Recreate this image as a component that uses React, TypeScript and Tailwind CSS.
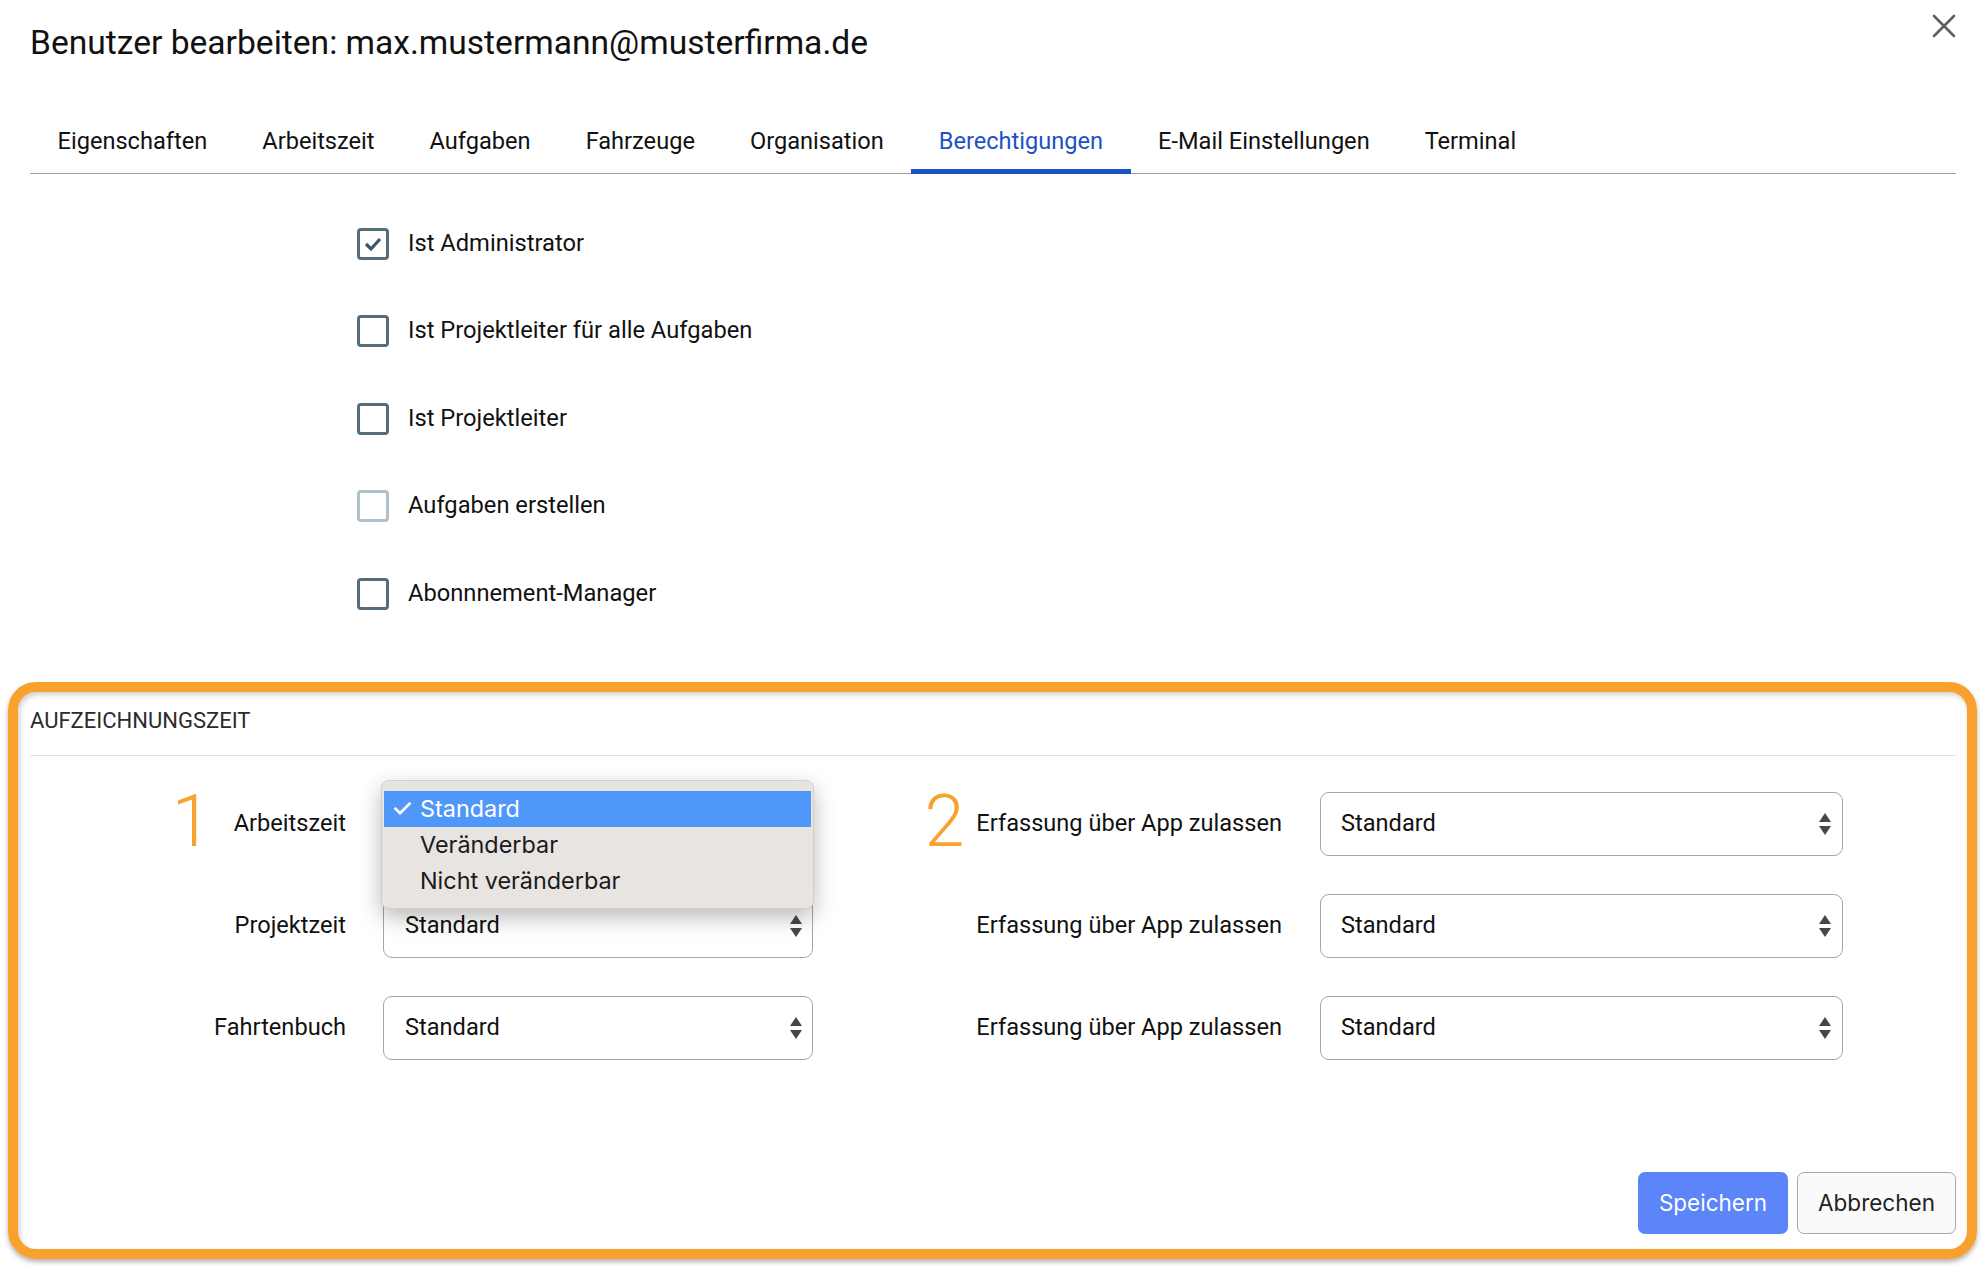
import React from "react";

const tabs = [
  "Eigenschaften",
  "Arbeitszeit",
  "Aufgaben",
  "Fahrzeuge",
  "Organisation",
  "Berechtigungen",
  "E-Mail Einstellungen",
  "Terminal",
];

const checks = [
  { label: "Ist Administrator", checked: true, disabled: false },
  { label: "Ist Projektleiter für alle Aufgaben", checked: false, disabled: false },
  { label: "Ist Projektleiter", checked: false, disabled: false },
  { label: "Aufgaben erstellen", checked: false, disabled: true },
  { label: "Abonnnement-Manager", checked: false, disabled: false },
];

function Arrows() {
  return (
    <svg width="12" height="22" viewBox="0 0 12 22" className="shrink-0">
      <path d="M6 0 L12 9 L0 9 Z" fill="#474747" />
      <path d="M0 13 L12 13 L6 22 Z" fill="#474747" />
    </svg>
  );
}

function Select({ wide, children }: { wide?: boolean; children?: React.ReactNode }) {
  return (
    <div
      className={
        wide
          ? "relative w-[523px] h-[64px] rounded-[9px] border border-[#a6a6a6] bg-white flex items-center justify-between pl-[20px] pr-[11px]"
          : "relative w-[430px] h-[64px] rounded-[9px] border border-[#a6a6a6] bg-white flex items-center justify-between pl-[21px] pr-[10px]"
      }
    >
      <span className="text-[23.6px] text-[#111]">Standard</span>
      <Arrows />
      {children}
    </div>
  );
}

function Popup() {
  return (
    <div className="absolute left-[-3px] top-[-13px] w-[433px] h-[129px] rounded-[8px] bg-[#e8e4e1] border border-[#d2cecb] shadow-[0_8px_22px_rgba(0,0,0,0.28)] pt-[10px] px-[2px] font-['Inter','Noto_Sans',sans-serif] text-[23.4px] text-[#1a1a1a] z-10">
      <div className="h-[36px] bg-[#4f97f8] text-white flex items-center pl-[7px]">
        <span className="w-[29px] text-[25px] leading-none font-medium">✓</span>
        <span>Standard</span>
      </div>
      <div className="h-[36px] flex items-center pl-[36px]">Veränderbar</div>
      <div className="h-[36px] flex items-center pl-[36px]">Nicht veränderbar</div>
    </div>
  );
}

export default function App() {
  return (
    <div className="w-[1986px] h-[1270px] bg-white font-['Roboto','Liberation_Sans',sans-serif] text-[#111] overflow-hidden">
      {/* Title */}
      <div className="h-[86px] px-[30px] flex items-center justify-between">
        <h1 className="text-[33.6px] leading-none font-normal text-[#111]">
          Benutzer bearbeiten: max.mustermann@musterfirma.de
        </h1>
        <svg width="24" height="24" viewBox="0 0 24 24" className="self-start mt-[14px]">
          <path d="M2 2 L22 22 M22 2 L2 22" stroke="#5f5f5f" strokeWidth="2.6" strokeLinecap="round" />
        </svg>
      </div>

      {/* Tabs */}
      <div className="mx-[30px] mt-[22px] flex border-b border-[#9e9e9e]">
        {tabs.map((t) => {
          const active = t === "Berechtigungen";
          return (
            <div
              key={t}
              className={
                active
                  ? "h-[66px] -mb-px px-[27.5px] pt-[6px] flex items-center text-[23.6px] text-[#1c53c3] border-b-[5px] border-[#1c53c3]"
                  : "h-[66px] -mb-px px-[27.5px] pt-[6px] flex items-center text-[23.6px] text-[#111] border-b-[5px] border-transparent"
              }
            >
              {t}
            </div>
          );
        })}
      </div>

      {/* Checkboxes */}
      <div className="pl-[357px] pt-[26px]">
        {checks.map((c) => (
          <div key={c.label} className="h-[87.5px] flex items-center">
            <div
              className={
                c.disabled
                  ? "w-[32px] h-[32px] rounded-[4px] border-[3px] border-[#b1bfc8] flex items-center justify-center"
                  : "w-[32px] h-[32px] rounded-[4px] border-[3px] border-[#546c7c] flex items-center justify-center"
              }
            >
              {c.checked && (
                <svg width="22" height="18" viewBox="0 0 22 18">
                  <path d="M4 9 L9 14 L18 4" fill="none" stroke="#3f5666" strokeWidth="3.2" />
                </svg>
              )}
            </div>
            <span className="ml-[19px] text-[23.7px] text-[#111]">{c.label}</span>
          </div>
        ))}
      </div>

      {/* Highlighted section */}
      <div className="ml-[8px] mt-[44px] w-[1969px] h-[577px] rounded-[28px] border-[10px] border-[#f9a12f] shadow-[0_3px_5px_rgba(0,0,0,0.3),inset_2px_3px_5px_rgba(0,0,0,0.18)] pl-[12px] pr-[11px] pb-[15px] flex flex-col">
        <div className="h-[63px] pb-[5px] flex items-center text-[22px] text-[#2b2b2b]">
          AUFZEICHNUNGSZEIT
        </div>
        <div className="h-px bg-[#e2e2e2]" />

        <div className="mt-[36px] flex flex-col gap-[38px]">
          {/* Row 1 */}
          <div className="flex items-center h-[64px]">
            <div className="w-[316px] flex items-center justify-end">
              <span className="text-[72px] leading-none font-light text-[#f9a12f] mt-[-4px]">1</span>
              <span className="ml-[22px] text-[23.6px]">Arbeitszeit</span>
            </div>
            <div className="ml-[37px]">
              <Select>
                <Popup />
              </Select>
            </div>
            <div className="w-[469px] flex items-center justify-end">
              <span className="text-[72px] leading-none font-light text-[#f9a12f] mt-[-4px]">2</span>
              <span className="ml-[12px] text-[23.6px]">Erfassung über App zulassen</span>
            </div>
            <div className="ml-[38px]">
              <Select wide />
            </div>
          </div>
          {/* Row 2 */}
          <div className="flex items-center h-[64px]">
            <div className="w-[316px] flex items-center justify-end">
              <span className="text-[23.6px]">Projektzeit</span>
            </div>
            <div className="ml-[37px]">
              <Select />
            </div>
            <div className="w-[469px] flex items-center justify-end">
              <span className="text-[23.6px]">Erfassung über App zulassen</span>
            </div>
            <div className="ml-[38px]">
              <Select wide />
            </div>
          </div>
          {/* Row 3 */}
          <div className="flex items-center h-[64px]">
            <div className="w-[316px] flex items-center justify-end">
              <span className="text-[23.6px]">Fahrtenbuch</span>
            </div>
            <div className="ml-[37px]">
              <Select />
            </div>
            <div className="w-[469px] flex items-center justify-end">
              <span className="text-[23.6px]">Erfassung über App zulassen</span>
            </div>
            <div className="ml-[38px]">
              <Select wide />
            </div>
          </div>
        </div>

        <div className="mt-auto flex justify-end gap-[9px]">
          <button className="w-[150px] h-[62px] rounded-[7px] bg-[#5b85f8] text-white text-[22.5px] font-['Inter','Roboto',sans-serif]">
            Speichern
          </button>
          <button className="w-[159px] h-[62px] rounded-[7px] bg-[#fafafa] border border-[#a8a8a8] text-[#222] text-[22.5px] font-['Inter','Roboto',sans-serif]">
            Abbrechen
          </button>
        </div>
      </div>
    </div>
  );
}
